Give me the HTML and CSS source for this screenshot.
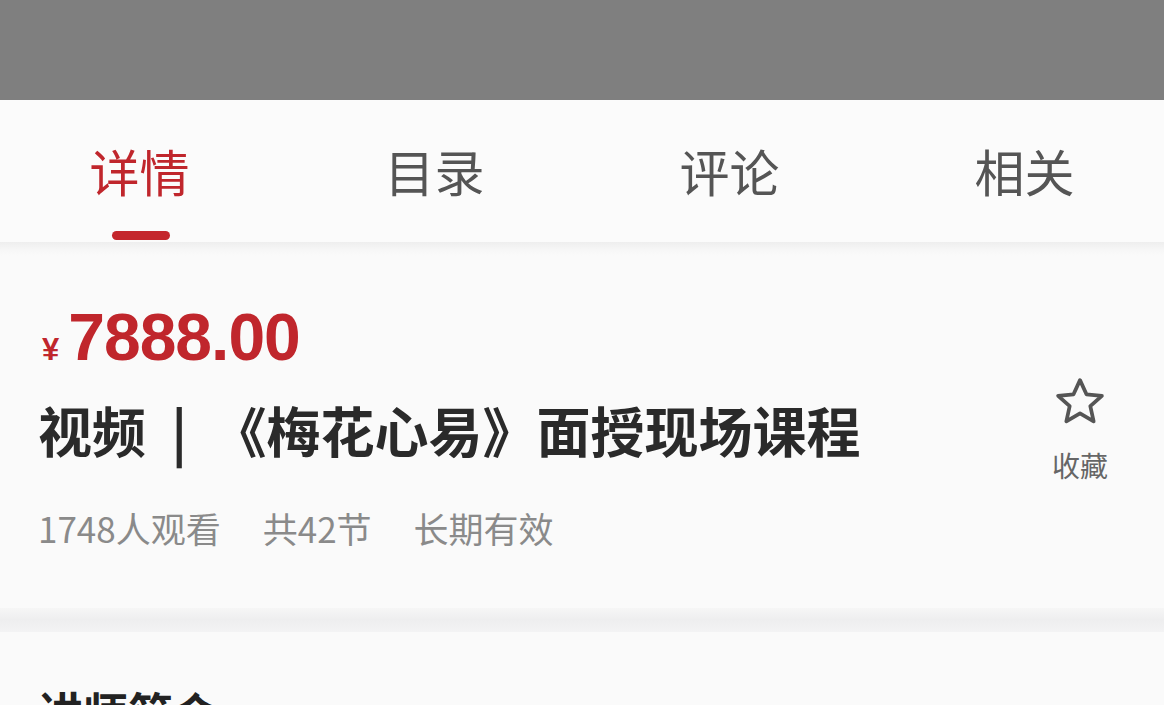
FILE: index.html
```html
<!DOCTYPE html>
<html lang="zh-CN">
<head>
<meta charset="utf-8">
<title>详情</title>
<link rel="stylesheet" href="styles.css">
</head>
<body>
<div class="status"></div>
<nav class="tabs">
  <div class="tab active"><span>详情</span><i class="bar"></i></div>
  <div class="tab"><span>目录</span></div>
  <div class="tab"><span>评论</span></div>
  <div class="tab"><span>相关</span></div>
</nav>
<div class="shade"></div>
<section class="info">
  <div class="price"><span class="yen">¥</span><span class="num">7888.00</span></div>
  <div class="title-row">
    <h1 class="title">视频 | 《梅花心易》面授现场课程</h1>
    <div class="fav">
      <svg class="star" viewBox="0 0 48 48" width="50" height="50">
        <path d="M24 3 L30.2 16.6 L45 18.1 L33.9 28 L37.1 42.6 L24 35 L10.9 42.6 L14.1 28 L3 18.1 L17.8 16.6 Z" fill="none" stroke="#555" stroke-width="3.6" stroke-linejoin="round"/>
      </svg>
      <span class="fav-label">收藏</span>
    </div>
  </div>
  <div class="meta"><span>1748人观看</span><span>共42节</span><span>长期有效</span></div>
</section>
<div class="gap"></div>
<section class="teacher">
  <h2>讲师简介</h2>
</section>
</body>
</html>
```

FILE: styles.css
```css
* { box-sizing: border-box; }
html, body { margin: 0; padding: 0; }
body {
  background: #fafafa;
  font-family: "Noto Sans CJK SC", "Noto Sans", sans-serif;
  width: 1164px;
  height: 705px;
  overflow: hidden;
}
.status {
  height: 100px;
  background: #7f7f7f;
}
.tabs {
  height: 142px;
  background: #fbfbfb;
  display: grid;
  grid-template-columns: repeat(4, 295px);
  justify-content: center;
}
.tab {
  display: flex;
  flex-direction: column;
  align-items: center;
  padding-top: 37px;
  font-size: 50px;
  line-height: 66px;
  color: #555;
}
.tab.active { color: #c0262c; }
.bar {
  display: block;
  width: 58px;
  height: 9px;
  border-radius: 5px;
  background: #c4262c;
  margin-top: 28px;
  margin-left: 2px;
}
.shade {
  height: 14px;
  background: linear-gradient(#eeeeee, #f7f7f7 60%, #fafafa);
}
.info {
  padding: 45px 38px 0 38px;
  height: 352px;
}
.price {
  display: flex;
  align-items: baseline;
  color: #c0262c;
  font-family: "Liberation Sans", Arial, sans-serif;
  font-weight: bold;
  margin-left: 4px;
}
.yen { font-size: 31px; margin-right: 9px; }
.num { font-size: 66px; line-height: 72px; letter-spacing: -1px; }
.title-row {
  display: flex;
  justify-content: space-between;
  align-items: flex-start;
}
.title {
  margin: 24px 0 0 0;
  font-size: 54px;
  line-height: 66px;
  font-weight: bold;
  color: #2a2a2a;
  word-spacing: 13px;
}
.fav {
  display: flex;
  flex-direction: column;
  align-items: center;
  margin-right: 18px;
  margin-top: 4px;
}
.star { display: block; }
.fav-label {
  margin-top: 20px;
  font-size: 28px;
  line-height: 36px;
  color: #666;
}
.meta {
  display: flex;
  gap: 42px;
  margin-top: 23px;
  font-size: 35px;
  line-height: 44px;
  color: #8a8a8a;
}
.gap {
  height: 24px;
  background: linear-gradient(#f6f6f6, #eeeeef 50%, #f3f3f4);
}
.teacher { padding: 50px 38px 0 38px; }
.teacher h2 {
  margin: 0;
  font-size: 45px;
  line-height: 60px;
  font-weight: bold;
  color: #222;
}
```
